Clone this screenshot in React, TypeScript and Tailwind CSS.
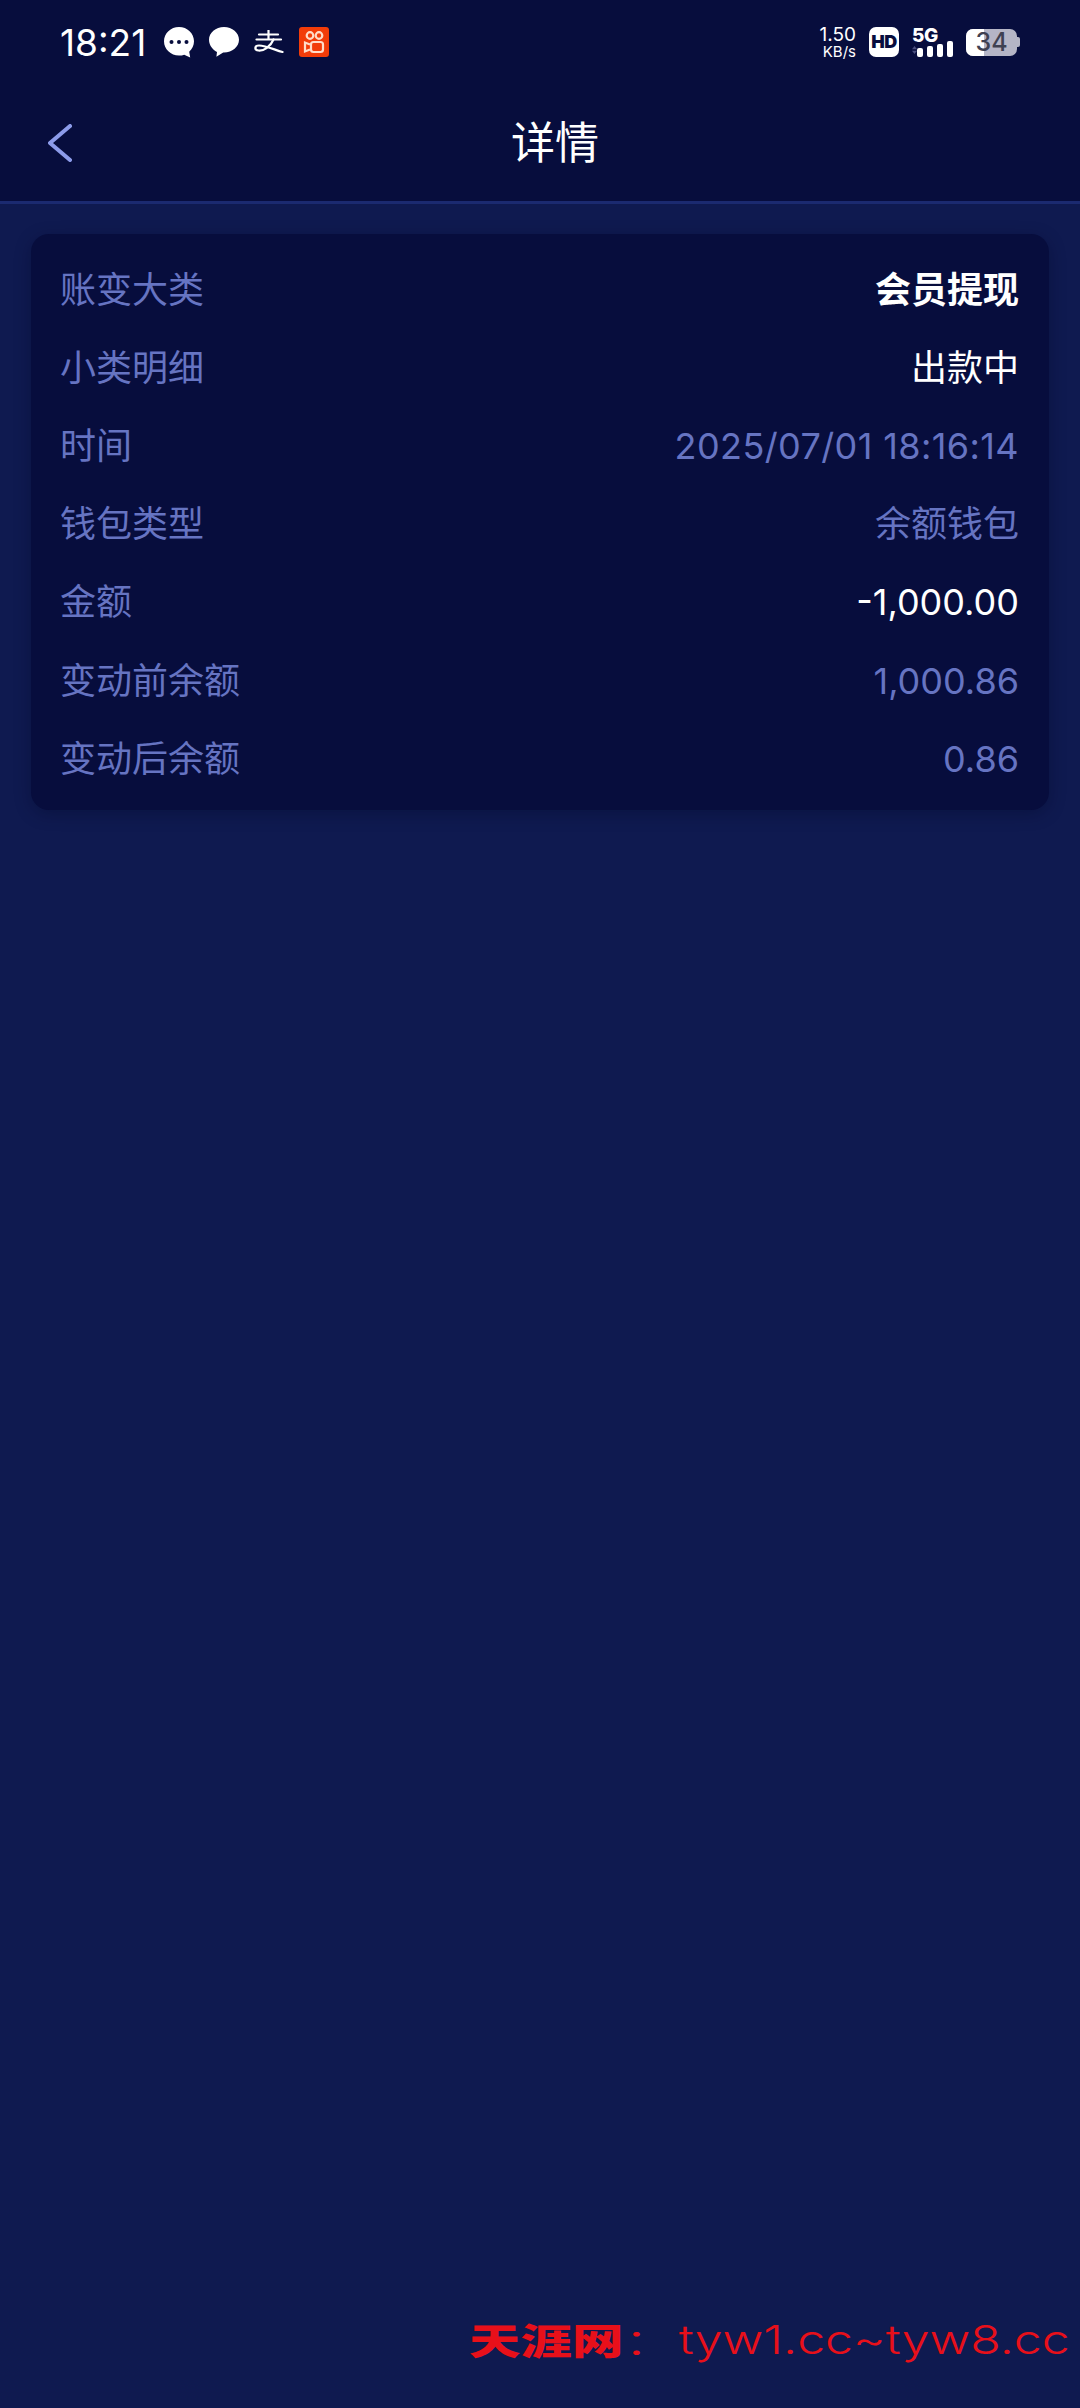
import React from 'react';

const CJK = "font-['Inter','Noto_Sans_CJK_SC',sans-serif]";

const rows = [
  { label: '账变大类', value: '会员提现', cls: 'text-white font-bold' },
  { label: '小类明细', value: '出款中', cls: 'text-white' },
  { label: '时间', value: '2025/07/01 18:16:14', cls: 'text-[#6674c2] tracking-[0.4px]' },
  { label: '钱包类型', value: '余额钱包', cls: 'text-[#6674c2]' },
  { label: '金额', value: '-1,000.00', cls: 'text-white' },
  { label: '变动前余额', value: '1,000.86', cls: 'text-[#6674c2]' },
  { label: '变动后余额', value: '0.86', cls: 'text-[#6674c2]' },
];

const BubbleDots = () => (
  <svg width="30" height="31" viewBox="0 0 30 31">
    <path fill="#fff" d="M15 0C6.7 0 0 6.4 0 14.3S6.7 28.6 15 28.6c2 0 3.6-.3 5.2-.9l6 2.9-1-5.8c3-2.6 4.8-6.3 4.8-10.5C30 6.4 23.3 0 15 0Z" />
    <circle cx="7.5" cy="15" r="2" fill="#070d3d" />
    <circle cx="15" cy="15" r="2" fill="#070d3d" />
    <circle cx="22.5" cy="15" r="2" fill="#070d3d" />
  </svg>
);

const Bubble = () => (
  <svg width="30" height="30" viewBox="0 0 30 30">
    <path fill="#fff" d="M15 0C6.7 0 0 5.7 0 12.8c0 6 4.6 10.9 8 12.2l-.6 4.8 6.8-4.3h.8c8.3 0 15-5.7 15-12.7S23.3 0 15 0Z" />
  </svg>
);

const AlipayMark = () => (
  <svg width="30" height="24" viewBox="0 0 30 24" fill="none" stroke="#fff" strokeWidth="2.2" strokeLinecap="round">
    <path d="M14.5 0.5V9" />
    <path d="M5 4.5H24" />
    <path d="M2.5 9.5H27" />
    <path d="M19.5 9.5C16.5 16.5 10 21 4.5 20.5C0 20 0.5 15.5 5 15.5C12 15.5 21 20 28.5 22" />
  </svg>
);

const KuaishouMark = () => (
  <svg width="30" height="30" viewBox="0 0 30 30">
    <rect width="30" height="30" rx="3" fill="#f23c09" />
    <g fill="none" stroke="#ffdcc8" strokeWidth="2.2">
      <circle cx="11" cy="8.5" r="3.3" />
      <circle cx="20" cy="8.5" r="3.3" />
      <rect x="12" y="15" width="12" height="10" rx="2.5" />
      <path d="M11 17.5 6 15.5V24.5L11 22.5" />
    </g>
  </svg>
);

const HdMark = () => (
  <div className="flex h-[30px] w-[30px] items-center justify-center rounded-[7px] bg-white text-[18px] leading-none font-black tracking-[-0.5px] text-[#070d3d] font-['Inter',sans-serif]">
    HD
  </div>
);

const Signal = () => (
  <div className="flex w-[41px] flex-col">
    <span className="text-[19px] leading-[15px] font-extrabold tracking-[-0.5px] text-white font-['Inter',sans-serif]">5G</span>
    <div className="flex items-end gap-[4px]">
      <svg width="9" height="14" viewBox="0 0 9 14" className="mr-[-4px]">
        <path d="M4.5 0 9 5.5H0Z" fill="#4b5080" />
        <path d="M4.5 14 9 8.5H0Z" fill="#4b5080" />
      </svg>
      <span className="h-[9px] w-[6px] shrink-0 rounded-[2px] bg-white" />
      <span className="h-[11px] w-[6px] shrink-0 rounded-[2px] bg-white" />
      <span className="h-[13px] w-[6px] shrink-0 rounded-[2px] bg-white" />
      <span className="mt-[-2px] h-[16px] w-[6px] shrink-0 rounded-[2px] bg-white" />
    </div>
  </div>
);

const Battery = () => (
  <div className="flex items-center">
    <div className="relative flex h-[27px] w-[51px] items-center justify-center rounded-[7px] bg-[#b5b5c6]">
      <span className="absolute top-0 bottom-0 left-0 w-[18px] rounded-l-[7px] bg-white" />
      <span className="relative text-[25px] leading-[27px] font-medium text-[#3f4152] font-['Inter',sans-serif]">34</span>
    </div>
    <span className="h-[10px] w-[3px] rounded-r-[2px] bg-[#b5b5c6]" />
  </div>
);

const StatusBar = () => (
  <div className="flex h-[84px] items-center justify-between pr-[60px] pl-[60px] font-['Inter',sans-serif]">
    <div className="flex items-center">
      <span className="w-[104px] text-[37px] leading-none text-white">18:21</span>
      <div className="flex items-center gap-[15px]">
        <BubbleDots />
        <Bubble />
        <AlipayMark />
        <KuaishouMark />
      </div>
    </div>
    <div className="flex items-center gap-[13px]">
      <div className="flex flex-col items-end text-white">
        <span className="text-[19px] leading-[19px]">1.50</span>
        <span className="text-[15px] leading-[15px]">KB/s</span>
      </div>
      <HdMark />
      <Signal />
      <Battery />
    </div>
  </div>
);

const Header = () => (
  <header className="border-b-[3px] border-[#1b2a70] bg-[#070d3d]">
    <StatusBar />
    <div className="relative flex h-[117px] items-center justify-center pl-[30px]">
      <svg className="absolute top-[40px] left-[48px]" width="24" height="38" viewBox="0 0 24 38" fill="none" stroke="#8c9bea" strokeWidth="4" strokeLinecap="round" strokeLinejoin="round">
        <path d="M22 2 2 19 22 36" />
      </svg>
      <h1 className="text-[44px] leading-none font-normal text-white">详情</h1>
    </div>
  </header>
);

export default function App() {
  return (
    <div className={`relative flex h-[2408px] w-[1080px] flex-col overflow-hidden bg-[#0f1a50] ${CJK}`}>
      <Header />
      <main className="px-[31px] pt-[30px]">
        <section className="rounded-[18px] bg-[#070d3d] pt-[17px] pr-[30px] pb-[12px] pl-[29px] shadow-[0_4px_16px_rgba(4,8,40,0.35)]">
          {rows.map((row) => (
            <div key={row.label} className="flex h-[78.1px] items-center justify-between text-[36px] leading-none">
              <span className="text-[#6674c2]">{row.label}</span>
              <span className={row.cls}>{row.value}</span>
            </div>
          ))}
        </section>
      </main>
      <div className="absolute bottom-[51px] left-[469px] origin-left scale-x-[1.43] text-[36px] leading-none text-[#e8101a] font-['Noto_Sans_CJK_SC',serif]">
        <span className="font-black">天涯网</span>
        <span className="font-light">：</span>
      </div>
      <span className="absolute right-[10px] bottom-[48px] origin-right scale-x-[1.25] text-[40px] leading-none font-light text-[#e8101a] font-['Inter',sans-serif]">
        tyw1.cc~tyw8.cc
      </span>
    </div>
  );
}
